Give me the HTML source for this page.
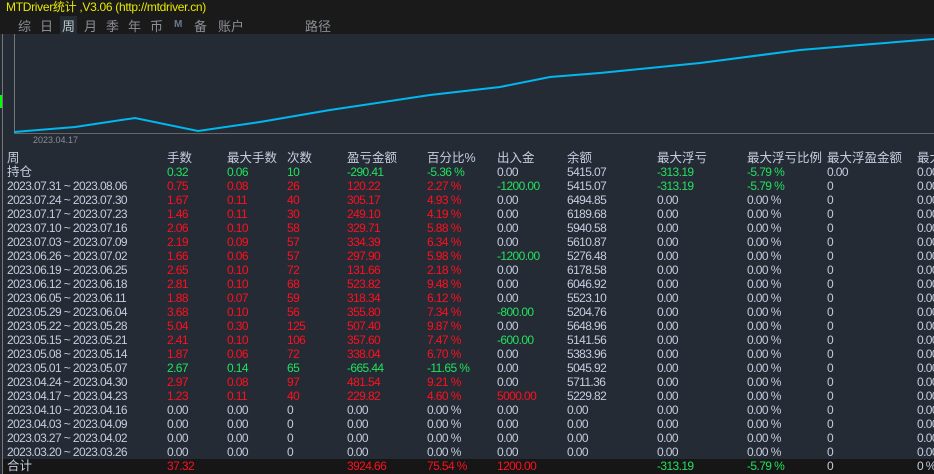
<!DOCTYPE html><html><head><meta charset="utf-8"><style>
*{margin:0;padding:0}body{width:934px;height:474px;background:#252b34;overflow:hidden;position:relative;font-family:"Liberation Sans","Noto Sans CJK SC",sans-serif;font-size:12px;color:#c4cde0}
.top{position:absolute;left:0;top:0;width:934px;height:34px;background:#1a1a1a}
.title{position:absolute;left:6px;top:-2px;color:#e8e800;font-size:12px;letter-spacing:-0.3px}
.tabs{position:absolute;top:16px;left:0;font-size:13px;color:#8a8e95}
.tabs span{position:absolute;top:0;white-space:nowrap}
.r{position:absolute;left:7px;height:14px;line-height:14px;white-space:nowrap;display:flex;letter-spacing:-0.6px}
.r span{display:inline-block}
.c0{width:160px}.c1,.c2,.c3{width:60px}.c4{width:80px}.c5,.c6{width:70px}.c7,.c8{width:90px}.c9{width:80px}.c10{width:90px}
.R{color:#ff1020}.G{color:#22e060}.h{font-size:12.5px;letter-spacing:0}
</style></head><body>
<div class="top"><div class="title">MTDriver统计 ,V3.06 (http://mtdriver.cn)</div>
<div class="tabs"><span style="left:18px">综</span><span style="left:40px">日</span><span style="left:60px;background:#252b34;color:#bcc;padding:0 2px">周</span><span style="left:84px">月</span><span style="left:106px">季</span><span style="left:128px">年</span><span style="left:150px">币</span><span style="left:174px;top:3px;font-size:10px;font-weight:bold;color:#6a7a90">M</span><span style="left:194px">备</span><span style="left:218px">账户</span><span style="left:305px">路径</span></div></div>
<div style="position:absolute;left:2px;top:34px;width:1px;height:440px;background:#777"></div>
<div style="position:absolute;left:0;top:95px;width:2px;height:13px;background:#0f0"></div>
<svg style="position:absolute;left:0;top:34px" width="934" height="110"><line x1="14.5" y1="0" x2="14.5" y2="99" stroke="#777"/><line x1="14" y1="99.5" x2="934" y2="99.5" stroke="#666"/>
<polyline fill="none" stroke="#00b8f0" stroke-width="2" points="14,98 75,93 135,84 198,97 260,88 330,76 430,61 500,53 550,43 600,39 700,29 800,16 860,11 934,5"/>
<text x="33" y="109" fill="#8a8e95" font-size="9" font-family="Liberation Sans">2023.04.17</text></svg>
<div class="r h" style="top:151px"><span class="c0">周</span><span class="c1">手数</span><span class="c2">最大手数</span><span class="c3">次数</span><span class="c4">盈亏金额</span><span class="c5">百分比%</span><span class="c6">出入金</span><span class="c7">余额</span><span class="c8">最大浮亏</span><span class="c9">最大浮亏比例</span><span class="c10">最大浮盈金额</span><span>最大</span></div>
<div class="r" style="top:165px"><span class="c0 h">持仓</span><span class="c1 G">0.32</span><span class="c2 G">0.06</span><span class="c3 G">10</span><span class="c4 G">-290.41</span><span class="c5 G">-5.36 %</span><span class="c6">0.00</span><span class="c7">5415.07</span><span class="c8 G">-313.19</span><span class="c9 G">-5.79 %</span><span class="c10">0.00</span><span>0.00</span></div>
<div class="r" style="top:179px"><span class="c0">2023.07.31 ~ 2023.08.06</span><span class="c1 R">0.75</span><span class="c2 R">0.08</span><span class="c3 R">26</span><span class="c4 R">120.22</span><span class="c5 R">2.27 %</span><span class="c6 G">-1200.00</span><span class="c7">5415.07</span><span class="c8 G">-313.19</span><span class="c9 G">-5.79 %</span><span class="c10">0</span><span>0.00</span></div>
<div class="r" style="top:193px"><span class="c0">2023.07.24 ~ 2023.07.30</span><span class="c1 R">1.67</span><span class="c2 R">0.11</span><span class="c3 R">40</span><span class="c4 R">305.17</span><span class="c5 R">4.93 %</span><span class="c6">0.00</span><span class="c7">6494.85</span><span class="c8">0.00</span><span class="c9">0.00 %</span><span class="c10">0</span><span>0.00</span></div>
<div class="r" style="top:207px"><span class="c0">2023.07.17 ~ 2023.07.23</span><span class="c1 R">1.46</span><span class="c2 R">0.11</span><span class="c3 R">30</span><span class="c4 R">249.10</span><span class="c5 R">4.19 %</span><span class="c6">0.00</span><span class="c7">6189.68</span><span class="c8">0.00</span><span class="c9">0.00 %</span><span class="c10">0</span><span>0.00</span></div>
<div class="r" style="top:221px"><span class="c0">2023.07.10 ~ 2023.07.16</span><span class="c1 R">2.06</span><span class="c2 R">0.10</span><span class="c3 R">58</span><span class="c4 R">329.71</span><span class="c5 R">5.88 %</span><span class="c6">0.00</span><span class="c7">5940.58</span><span class="c8">0.00</span><span class="c9">0.00 %</span><span class="c10">0</span><span>0.00</span></div>
<div class="r" style="top:235px"><span class="c0">2023.07.03 ~ 2023.07.09</span><span class="c1 R">2.19</span><span class="c2 R">0.09</span><span class="c3 R">57</span><span class="c4 R">334.39</span><span class="c5 R">6.34 %</span><span class="c6">0.00</span><span class="c7">5610.87</span><span class="c8">0.00</span><span class="c9">0.00 %</span><span class="c10">0</span><span>0.00</span></div>
<div class="r" style="top:249px"><span class="c0">2023.06.26 ~ 2023.07.02</span><span class="c1 R">1.66</span><span class="c2 R">0.06</span><span class="c3 R">57</span><span class="c4 R">297.90</span><span class="c5 R">5.98 %</span><span class="c6 G">-1200.00</span><span class="c7">5276.48</span><span class="c8">0.00</span><span class="c9">0.00 %</span><span class="c10">0</span><span>0.00</span></div>
<div class="r" style="top:263px"><span class="c0">2023.06.19 ~ 2023.06.25</span><span class="c1 R">2.65</span><span class="c2 R">0.10</span><span class="c3 R">72</span><span class="c4 R">131.66</span><span class="c5 R">2.18 %</span><span class="c6">0.00</span><span class="c7">6178.58</span><span class="c8">0.00</span><span class="c9">0.00 %</span><span class="c10">0</span><span>0.00</span></div>
<div class="r" style="top:277px"><span class="c0">2023.06.12 ~ 2023.06.18</span><span class="c1 R">2.81</span><span class="c2 R">0.10</span><span class="c3 R">68</span><span class="c4 R">523.82</span><span class="c5 R">9.48 %</span><span class="c6">0.00</span><span class="c7">6046.92</span><span class="c8">0.00</span><span class="c9">0.00 %</span><span class="c10">0</span><span>0.00</span></div>
<div class="r" style="top:291px"><span class="c0">2023.06.05 ~ 2023.06.11</span><span class="c1 R">1.88</span><span class="c2 R">0.07</span><span class="c3 R">59</span><span class="c4 R">318.34</span><span class="c5 R">6.12 %</span><span class="c6">0.00</span><span class="c7">5523.10</span><span class="c8">0.00</span><span class="c9">0.00 %</span><span class="c10">0</span><span>0.00</span></div>
<div class="r" style="top:305px"><span class="c0">2023.05.29 ~ 2023.06.04</span><span class="c1 R">3.68</span><span class="c2 R">0.10</span><span class="c3 R">56</span><span class="c4 R">355.80</span><span class="c5 R">7.34 %</span><span class="c6 G">-800.00</span><span class="c7">5204.76</span><span class="c8">0.00</span><span class="c9">0.00 %</span><span class="c10">0</span><span>0.00</span></div>
<div class="r" style="top:319px"><span class="c0">2023.05.22 ~ 2023.05.28</span><span class="c1 R">5.04</span><span class="c2 R">0.30</span><span class="c3 R">125</span><span class="c4 R">507.40</span><span class="c5 R">9.87 %</span><span class="c6">0.00</span><span class="c7">5648.96</span><span class="c8">0.00</span><span class="c9">0.00 %</span><span class="c10">0</span><span>0.00</span></div>
<div class="r" style="top:333px"><span class="c0">2023.05.15 ~ 2023.05.21</span><span class="c1 R">2.41</span><span class="c2 R">0.10</span><span class="c3 R">106</span><span class="c4 R">357.60</span><span class="c5 R">7.47 %</span><span class="c6 G">-600.00</span><span class="c7">5141.56</span><span class="c8">0.00</span><span class="c9">0.00 %</span><span class="c10">0</span><span>0.00</span></div>
<div class="r" style="top:347px"><span class="c0">2023.05.08 ~ 2023.05.14</span><span class="c1 R">1.87</span><span class="c2 R">0.06</span><span class="c3 R">72</span><span class="c4 R">338.04</span><span class="c5 R">6.70 %</span><span class="c6">0.00</span><span class="c7">5383.96</span><span class="c8">0.00</span><span class="c9">0.00 %</span><span class="c10">0</span><span>0.00</span></div>
<div class="r" style="top:361px"><span class="c0">2023.05.01 ~ 2023.05.07</span><span class="c1 G">2.67</span><span class="c2 G">0.14</span><span class="c3 G">65</span><span class="c4 G">-665.44</span><span class="c5 G">-11.65 %</span><span class="c6">0.00</span><span class="c7">5045.92</span><span class="c8">0.00</span><span class="c9">0.00 %</span><span class="c10">0</span><span>0.00</span></div>
<div class="r" style="top:375px"><span class="c0">2023.04.24 ~ 2023.04.30</span><span class="c1 R">2.97</span><span class="c2 R">0.08</span><span class="c3 R">97</span><span class="c4 R">481.54</span><span class="c5 R">9.21 %</span><span class="c6">0.00</span><span class="c7">5711.36</span><span class="c8">0.00</span><span class="c9">0.00 %</span><span class="c10">0</span><span>0.00</span></div>
<div class="r" style="top:389px"><span class="c0">2023.04.17 ~ 2023.04.23</span><span class="c1 R">1.23</span><span class="c2 R">0.11</span><span class="c3 R">40</span><span class="c4 R">229.82</span><span class="c5 R">4.60 %</span><span class="c6 R">5000.00</span><span class="c7">5229.82</span><span class="c8">0.00</span><span class="c9">0.00 %</span><span class="c10">0</span><span>0.00</span></div>
<div class="r" style="top:403px"><span class="c0">2023.04.10 ~ 2023.04.16</span><span class="c1">0.00</span><span class="c2">0.00</span><span class="c3">0</span><span class="c4">0.00</span><span class="c5">0.00 %</span><span class="c6">0.00</span><span class="c7">0.00</span><span class="c8">0.00</span><span class="c9">0.00 %</span><span class="c10">0</span><span>0.00</span></div>
<div class="r" style="top:417px"><span class="c0">2023.04.03 ~ 2023.04.09</span><span class="c1">0.00</span><span class="c2">0.00</span><span class="c3">0</span><span class="c4">0.00</span><span class="c5">0.00 %</span><span class="c6">0.00</span><span class="c7">0.00</span><span class="c8">0.00</span><span class="c9">0.00 %</span><span class="c10">0</span><span>0.00</span></div>
<div class="r" style="top:431px"><span class="c0">2023.03.27 ~ 2023.04.02</span><span class="c1">0.00</span><span class="c2">0.00</span><span class="c3">0</span><span class="c4">0.00</span><span class="c5">0.00 %</span><span class="c6">0.00</span><span class="c7">0.00</span><span class="c8">0.00</span><span class="c9">0.00 %</span><span class="c10">0</span><span>0.00</span></div>
<div class="r" style="top:445px"><span class="c0">2023.03.20 ~ 2023.03.26</span><span class="c1">0.00</span><span class="c2">0.00</span><span class="c3">0</span><span class="c4">0.00</span><span class="c5">0.00 %</span><span class="c6">0.00</span><span class="c7">0.00</span><span class="c8">0.00</span><span class="c9">0.00 %</span><span class="c10">0</span><span>0.00</span></div>
<div style="position:absolute;left:3px;top:459px;width:931px;height:15px;background:#161616"></div>
<div class="r" style="top:459px"><span class="c0 h">合计</span><span class="c1 R">37.32</span><span class="c2"></span><span class="c3"></span><span class="c4 R">3924.66</span><span class="c5 R">75.54 %</span><span class="c6 R">1200.00</span><span class="c7"></span><span class="c8 G">-313.19</span><span class="c9 G">-5.79 %</span><span class="c10">0</span><span>0 %</span></div>
</body></html>
